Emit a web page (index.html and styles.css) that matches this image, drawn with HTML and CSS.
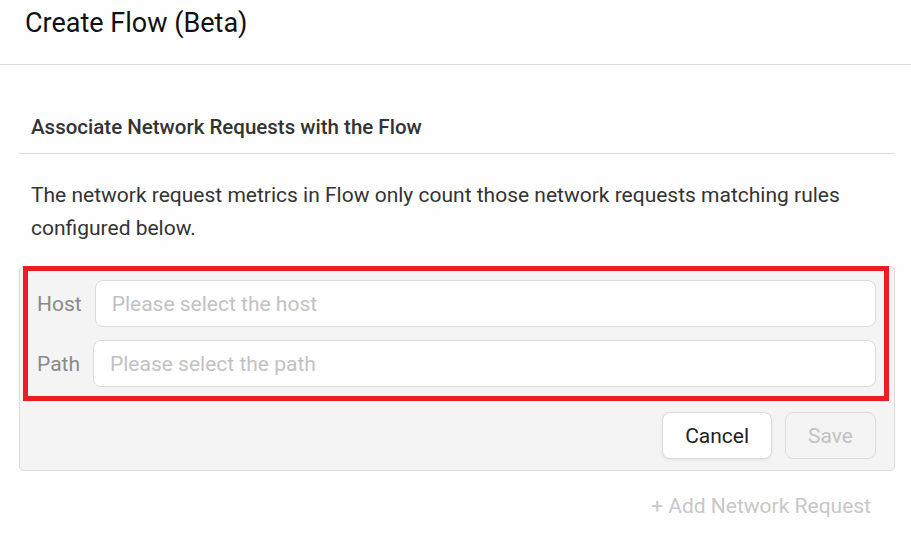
FILE: index.html
```html
<!DOCTYPE html>
<html lang="en">
<head>
    <meta charset="UTF-8">
    <meta name="viewport" content="width=device-width, initial-scale=1.0">
    <title>Create Flow (Beta)</title>
    <link rel="stylesheet" href="styles.css">
</head>
<body>
    <div class="modal-header">
        <h1>Create Flow (Beta)</h1>
    </div>

    <div class="modal-body">
        <h2 class="section-title">Associate Network Requests with the Flow</h2>
        <p class="section-desc">The network request metrics in Flow only count those network requests matching rules configured below.</p>

        <div class="rule-card">
            <div class="rule-fields highlight">
                <div class="field-row">
                    <label>Host</label>
                    <div class="select-box">Please select the host</div>
                </div>
                <div class="field-row">
                    <label>Path</label>
                    <div class="select-box">Please select the path</div>
                </div>
            </div>
            <div class="rule-actions">
                <button class="btn">Cancel</button>
                <button class="btn" disabled>Save</button>
            </div>
        </div>

        <div class="add-request">
            <span>+ Add Network Request</span>
        </div>
    </div>
</body>
</html>
```

FILE: styles.css
```css
* {
    margin: 0;
    padding: 0;
    box-sizing: border-box;
}

body {
    font-family: Roboto, 'Liberation Sans', sans-serif;
    background: #fefefe;
    color: #222;
}

.modal-header {
    height: 65px;
    padding: 7px 25px 0;
    border-bottom: 1px solid #dcdcdc;
}

.modal-header h1 {
    font-size: 27px;
    font-weight: 400;
    line-height: 32px;
    color: #111;
}

.modal-body {
    padding: 50px 16px 0 19px;
}

.section-title {
    font-size: 20.5px;
    font-weight: 500;
    line-height: 24px;
    color: #333;
    padding: 0 0 14px 12px;
    border-bottom: 1px solid #dcdcdc;
}

.section-desc {
    font-size: 21px;
    line-height: 33px;
    color: #333;
    padding: 25px 12px 0;
}

.rule-card {
    margin-top: 21px;
    background: #f4f4f4;
    border: 1px solid #dcdcdc;
    border-radius: 5px;
    padding: 13px 18px 11px 17px;
}

.rule-fields {
    display: flex;
    flex-direction: column;
    gap: 13px;
}

.highlight {
    position: relative;
}

.highlight::after {
    content: '';
    position: absolute;
    top: -14px;
    left: -14px;
    right: -13px;
    bottom: -14px;
    border: 5px solid #ee1c25;
    pointer-events: none;
}

.field-row {
    display: flex;
    align-items: center;
    gap: 13px;
}

.field-row label {
    font-size: 21px;
    color: #8a8a8a;
}

.select-box {
    flex: 1;
    height: 47px;
    background: white;
    border: 1px solid #dcdcdc;
    border-radius: 8px;
    padding: 0 16px;
    display: flex;
    align-items: center;
    font-size: 21px;
    color: #c2c2c2;
}

.rule-actions {
    display: flex;
    justify-content: flex-end;
    gap: 13px;
    margin-top: 25px;
}

.btn {
    height: 47px;
    padding: 0 22px;
    font-family: inherit;
    font-size: 21px;
    color: #222;
    background: white;
    border: 1px solid #dcdcdc;
    border-radius: 8px;
    box-shadow: 0 1px 3px rgba(0,0,0,0.08);
    cursor: pointer;
}

.btn:disabled {
    color: #c2c2c2;
    background: transparent;
    box-shadow: none;
    cursor: not-allowed;
}

.add-request {
    display: flex;
    justify-content: flex-end;
    padding: 23px 24px 0 0;
    font-size: 21px;
    color: #c8c8c8;
}
```
